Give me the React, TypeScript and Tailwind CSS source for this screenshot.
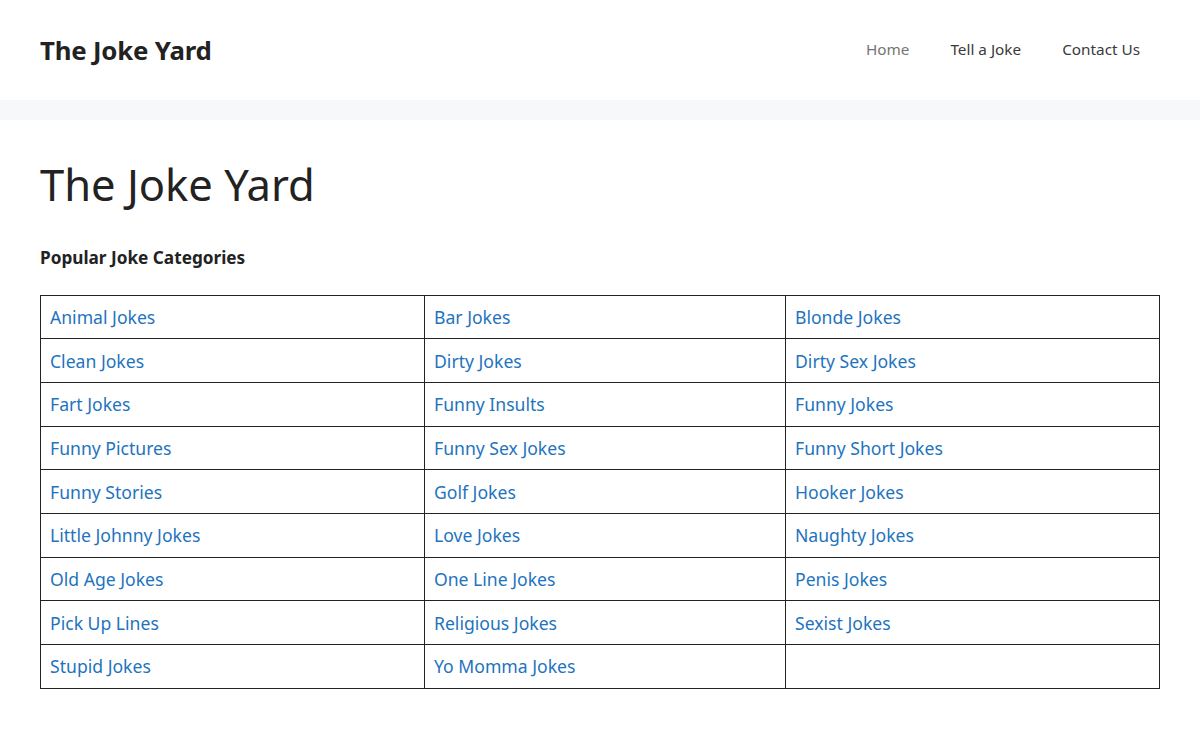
const rows: string[][] = [
  ["Animal Jokes", "Bar Jokes", "Blonde Jokes"],
  ["Clean Jokes", "Dirty Jokes", "Dirty Sex Jokes"],
  ["Fart Jokes", "Funny Insults", "Funny Jokes"],
  ["Funny Pictures", "Funny Sex Jokes", "Funny Short Jokes"],
  ["Funny Stories", "Golf Jokes", "Hooker Jokes"],
  ["Little Johnny Jokes", "Love Jokes", "Naughty Jokes"],
  ["Old Age Jokes", "One Line Jokes", "Penis Jokes"],
  ["Pick Up Lines", "Religious Jokes", "Sexist Jokes"],
  ["Stupid Jokes", "Yo Momma Jokes", ""],
];

export default function App() {
  return (
    <div className="min-h-[740px] bg-white font-['Noto_Sans',sans-serif] text-[#222222]">
      <header className="flex h-[100px] items-center justify-between px-10">
        <div className="text-[25.8px] font-bold tracking-[-0.2px]">The Joke Yard</div>
        <nav className="flex -translate-y-px items-center gap-[41px] pr-[20px] text-[15.3px]">
          <a className="text-[#757575]">Home</a>
          <a className="text-[#3a3a3a]">Tell a Joke</a>
          <a className="text-[#3a3a3a]">Contact Us</a>
        </nav>
      </header>
      <div className="h-5 bg-[#f7f8f9]" />
      <main className="px-10 pt-[34px]">
        <h1 className="text-[43.5px] leading-[60px] font-normal">The Joke Yard</h1>
        <h2 className="mt-[31px] text-[17.2px] font-bold">Popular Joke Categories</h2>
        <table className="mt-[24px] w-full border-collapse text-[17.6px]">
          <colgroup>
            <col className="w-[384px]" />
            <col className="w-[361px]" />
            <col />
          </colgroup>
          <tbody>
            {rows.map((r, i) => (
              <tr key={i} className="h-[43.67px]">
                {r.map((c, j) => (
                  <td key={j} className="border border-[#222222] px-[9px] py-0 align-middle">
                    {c && <a className="text-[#1e73be]">{c}</a>}
                  </td>
                ))}
              </tr>
            ))}
          </tbody>
        </table>
      </main>
    </div>
  );
}
